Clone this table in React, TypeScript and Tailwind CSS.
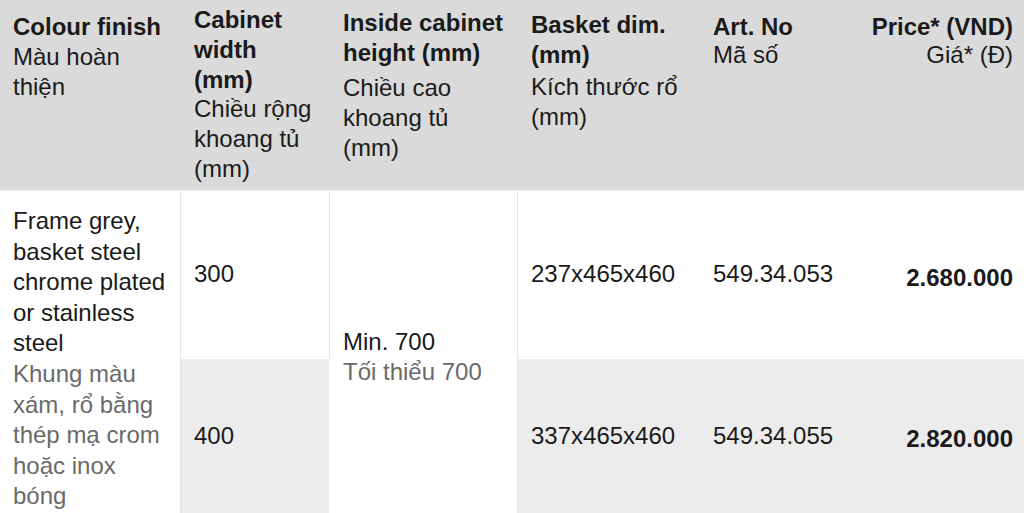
const font = { fontFamily: '"Liberation Sans", Arial, Helvetica, sans-serif' }

const rows = [
  { width: '300', basket: '237x465x460', art: '549.34.053', price: '2.680.000', bg: 'bg-white' },
  { width: '400', basket: '337x465x460', art: '549.34.055', price: '2.820.000', bg: 'bg-[#ececed]' },
]

export default function App() {
  return (
    <div className="w-[1024px] h-[513px] overflow-hidden bg-white text-[24px] text-[#1a1a1a]" style={font}>
      {/* header */}
      <div className="grid grid-cols-[181px_149px_188px_182px_160px_1fr] h-[190px] bg-[#dadada] leading-[30px]">
        <div className="pl-[13px] pt-[12px]">
          <div className="font-bold">Colour finish</div>
          <div>Màu hoàn<br />thiện</div>
        </div>
        <div className="pl-[13px] pt-[5px]">
          <div className="font-bold">Cabinet<br />width<br />(mm)</div>
          <div className="-mt-[1px]">Chiều rộng<br />khoang tủ<br />(mm)</div>
        </div>
        <div className="pl-[13px] pt-[8px]">
          <div className="font-bold">Inside cabinet<br />height (mm)</div>
          <div className="mt-[5px]">Chiều cao<br />khoang tủ<br />(mm)</div>
        </div>
        <div className="pl-[13px] pt-[10px]">
          <div className="font-bold">Basket dim.<br />(mm)</div>
          <div className="mt-[2px]">Kích thước rổ<br />(mm)</div>
        </div>
        <div className="pl-[13px] pt-[12px]">
          <div className="font-bold">Art. No</div>
          <div className="-mt-[2px]">Mã số</div>
        </div>
        <div className="pr-[11px] pt-[12px] text-right whitespace-nowrap">
          <div className="font-bold">Price* (VND)</div>
          <div className="-mt-[2px]">Giá* (Đ)</div>
        </div>
      </div>

      {/* body */}
      <div className="grid grid-cols-[181px_149px_188px_182px_160px_1fr] grid-rows-[168px_160px] border-t border-[#eeeeee]">
        <div className="row-span-2 border-r border-[#e6e6e6] pl-[13px] pt-[15px] leading-[30.6px]">
          <div>Frame grey,<br />basket steel<br />chrome plated<br />or stainless<br />steel</div>
          <div className="text-[#6a6a6a]">Khung màu<br />xám, rổ bằng<br />thép mạ crom<br />hoặc inox<br />bóng</div>
        </div>

        <div className="border-r border-[#e6e6e6] flex items-center pl-[13px] pb-[3px]">{rows[0].width}</div>

        <div className="row-span-2 border-r border-[#e6e6e6] pl-[13px] pt-[136px] leading-[30px]">
          <div>Min. 700</div>
          <div className="text-[#6a6a6a]">Tối thiểu 700</div>
        </div>

        <div className="flex items-center pl-[13px] pb-[3px]">{rows[0].basket}</div>
        <div className="flex items-center pl-[13px] pb-[3px]">{rows[0].art}</div>
        <div className="flex items-center justify-end pr-[11px] pt-[5px] font-bold">{rows[0].price}</div>

        <div className={`${rows[1].bg} border-r border-white flex items-start pl-[13px] pt-[59px]`}>{rows[1].width}</div>
        <div className={`${rows[1].bg} col-start-4 flex items-start pl-[13px] pt-[59px]`}>{rows[1].basket}</div>
        <div className={`${rows[1].bg} flex items-start pl-[13px] pt-[59px]`}>{rows[1].art}</div>
        <div className={`${rows[1].bg} flex items-start justify-end pr-[11px] pt-[62px] font-bold`}>{rows[1].price}</div>
      </div>
    </div>
  )
}
